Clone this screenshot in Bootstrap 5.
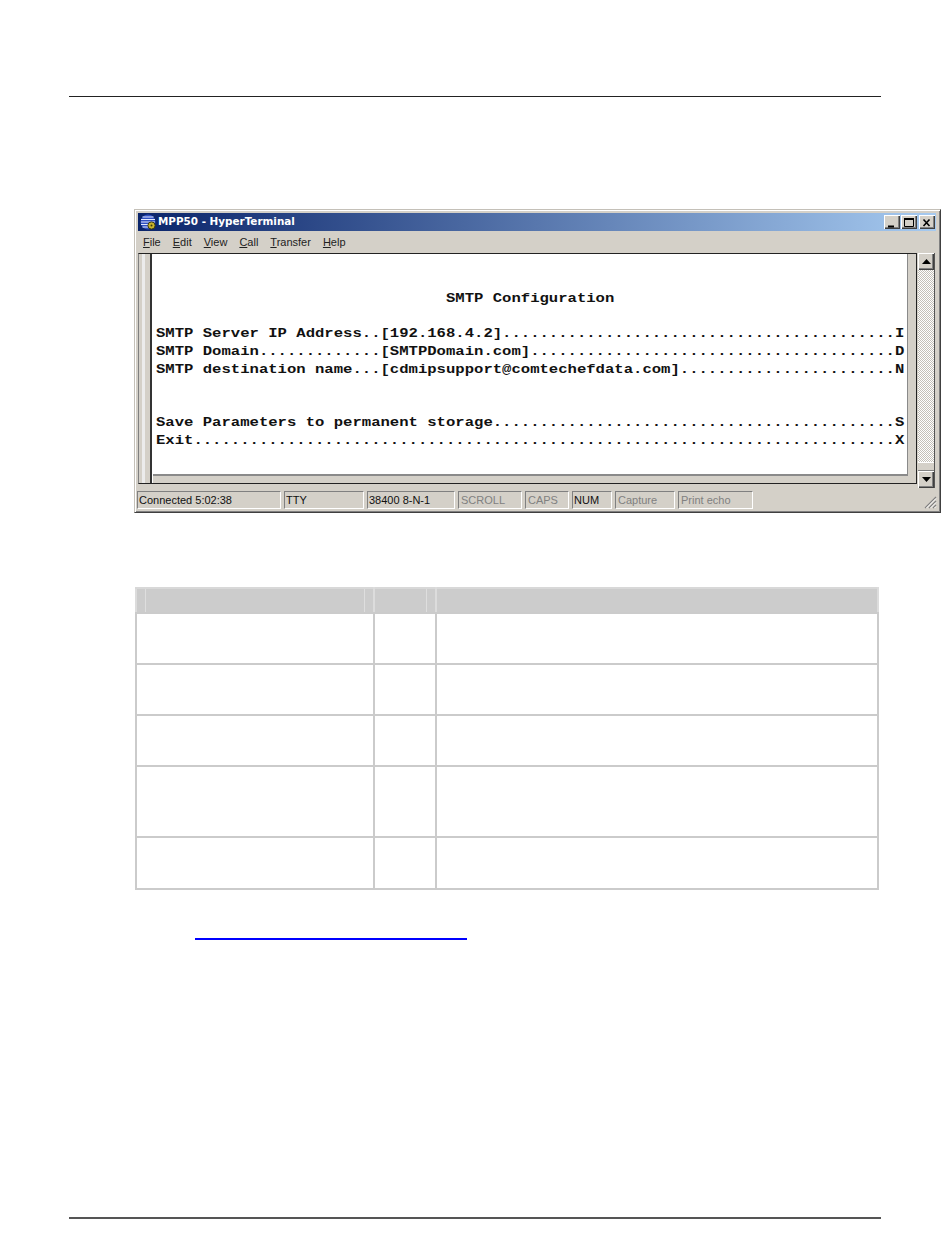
<!DOCTYPE html>
<html lang="en">
<head>
<meta charset="utf-8">
<title>MPP50 - HyperTerminal</title>
<link href="https://cdn.jsdelivr.net/npm/bootstrap@5.3.0/dist/css/bootstrap.min.css" rel="stylesheet">
<style>
body{background:#fff;height:1260px;overflow:hidden;font-family:"Liberation Sans",sans-serif}
.sheet{margin-left:69px;width:812px;height:1260px}
.rule-top{height:97px;border-bottom:1px solid #222}
.rule-bottom{height:2px;background:#555;margin-top:277px}

/* window */
.win{width:807px;height:304px;margin:112px 0 0 65px;background:#d4d0c8;border:1px solid #404040;border-top-color:#c4c0b8;border-left-color:#c4c0b8;box-shadow:inset 1px 1px 0 #fff,inset -1px -1px 0 #808080;padding:3px 4px 3px 3px;font-size:11px;color:#000}
.title-bar{height:18px;background:linear-gradient(90deg,#0a246a,#a6caf0);color:#fff;font-family:"DejaVu Sans",sans-serif;font-weight:700;font-size:10.4px;padding-left:2px;gap:1px}
.win-btn{width:16px;height:14px;background:#d4d0c8;box-shadow:inset 1px 1px 0 #fff,inset -1px -1px 0 #404040,inset -2px -2px 0 #808080;flex:none}
.win-btn-close{margin-left:1px}
.btn-group-win{gap:1px;margin-right:1px}
.menu-row{height:22px;gap:12px;padding-left:5px;font-size:11px;color:#222}
.term-wrap{height:235px;gap:1px}
.term-frame{flex:0 0 779px;height:231px;border:1px solid #222;border-left-color:#808080}
.left-gut{width:14px;flex:none;background:linear-gradient(90deg,#d4d0c8 0,#d4d0c8 3px,#ececec 3px,#ececec 6px,#d4d0c8 6px,#d4d0c8 11px,#333 11px,#333 13px,#fff 13px)}
.term-main{flex:1 1 auto;min-width:0;padding:0 8px 7px 0}
.term-white{height:222px;background:#fff;border-bottom:2px solid #8a8a8a;border-right:1px solid #8a8a8a;overflow:hidden}
.term-text{margin:0 0 0 3px;padding-top:36px;font-family:"Liberation Mono",monospace;font-weight:700;font-size:13px;line-height:17.7px;color:#111;overflow:visible;transform:scaleX(1.199);transform-origin:0 0;width:624px;white-space:pre}
.scroll-col{width:17px;flex:none;background:repeating-conic-gradient(#c4c0b8 0 25%,#fff 0 50%) 0 0/2px 2px;border-right:1px solid #555}
.arrow-btn{height:17px;background:#d4d0c8;box-shadow:inset 1px 1px 0 #fff,inset -1px -1px 0 #404040,inset -2px -2px 0 #808080}
.thumb-stub{height:9px;background:#d4d0c8;box-shadow:inset 0 1px 0 #fff,inset 0 -1px 0 #808080}
.status-row{height:18px;margin:3px 0 0 -1px;gap:3px;font-size:11px;line-height:17px}
.sfield{height:18px;border:1px solid;border-color:#808080 #fff #fff #808080;padding-left:1px;white-space:nowrap;color:#111}
.sfield-off{color:#808080;padding-left:2px}
.w-a{width:144px}.w-b{width:80px}.w-c{width:88px}.w-d{width:64px}.w-e{width:44px}.w-f{width:40px}.w-g{width:60px}.w-h{width:75px}
.grip{width:14px;height:14px;margin-top:4px;margin-right:-1px}

/* table */
.spec-table{width:742px;margin:74px 0 0 66px;table-layout:fixed;border-collapse:collapse;--bs-table-bg:transparent}
.spec-table th,.spec-table td{border:2px solid #cbcbcb;padding:0}
.spec-table thead th{height:25px;background:#ccc;border-left-color:#dcdcdc;border-right-color:#dcdcdc;border-top-color:#d8d8d8}
.head-tick{height:23px;margin:0 8px;border-left:1px solid #dedede;border-right:1px solid #dedede}
.tick-end{border-left:0}
.r51{height:51px}.r52{height:52px}.r71{height:71px}

.link-row{margin:48px 0 0 126px;height:2px}
.link-line{display:block;width:272px;border-bottom:2px solid #0000ff;text-decoration:none}
</style>
</head>
<body>
<div class="sheet">
  <div class="rule-top"></div>

  <div class="win">
    <div class="title-bar d-flex align-items-center">
      <svg width="17" height="17" viewBox="0 0 17 17" class="flex-shrink-0">
        <circle cx="8" cy="8" r="7.5" fill="#2f4fc0"/>
        <path d="M2.5 3h11M1 5.5h14M1 8h14M1 10.5h14M2.5 13h10" stroke="#e4eaff" stroke-width="1.1"/>
        <circle cx="11.5" cy="11.5" r="3.6" fill="#c9b52c" stroke="#3a3a10" stroke-width="1"/>
        <circle cx="11.5" cy="11.5" r="1" fill="#3a3a10"/>
      </svg>
      <span class="flex-grow-1">MPP50 - HyperTerminal</span>
      <div class="d-flex btn-group-win">
        <div class="win-btn"><svg width="16" height="14" viewBox="0 0 16 14"><path d="M4 10.5h6" stroke="#000" stroke-width="2"/></svg></div>
        <div class="win-btn"><svg width="16" height="14" viewBox="0 0 16 14"><path d="M3.5 3.5h9v7h-9z" fill="none" stroke="#000"/><path d="M3 3h10" stroke="#000" stroke-width="2"/></svg></div>
        <div class="win-btn win-btn-close"><svg width="16" height="14" viewBox="0 0 16 14"><path d="M4.5 3.5l6 6.5M10.5 3.5l-6 6.5" stroke="#000" stroke-width="1.6"/></svg></div>
      </div>
    </div>
    <div class="menu-row d-flex align-items-center">
      <span><u>F</u>ile</span><span><u>E</u>dit</span><span><u>V</u>iew</span><span><u>C</u>all</span><span><u>T</u>ransfer</span><span><u>H</u>elp</span>
    </div>
    <div class="term-wrap d-flex">
      <div class="term-frame d-flex">
        <div class="left-gut"></div>
        <div class="term-main">
          <div class="term-white">
<pre class="term-text">                               SMTP Configuration

SMTP Server IP Address..[192.168.4.2]..........................................I
SMTP Domain.............[SMTPDomain.com].......................................D
SMTP destination name...[cdmipsupport@comtechefdata.com].......................N


Save Parameters to permanent storage...........................................S
Exit...........................................................................X</pre>
          </div>
        </div>
      </div>
      <div class="scroll-col d-flex flex-column">
        <div class="arrow-btn d-flex align-items-center justify-content-center"><svg width="9" height="5" viewBox="0 0 9 5"><path d="M4.5 0L9 5H0z" fill="#000"/></svg></div>
        <div class="flex-grow-1"></div>
        <div class="thumb-stub"></div>
        <div class="arrow-btn d-flex align-items-center justify-content-center"><svg width="9" height="5" viewBox="0 0 9 5"><path d="M0 0h9L4.5 5z" fill="#000"/></svg></div>
      </div>
    </div>
    <div class="status-row d-flex">
      <div class="sfield w-a">Connected 5:02:38</div>
      <div class="sfield w-b">TTY</div>
      <div class="sfield w-c">38400 8-N-1</div>
      <div class="sfield sfield-off w-d">SCROLL</div>
      <div class="sfield sfield-off w-e">CAPS</div>
      <div class="sfield w-f">NUM</div>
      <div class="sfield sfield-off w-g">Capture</div>
      <div class="sfield sfield-off w-h">Print echo</div>
      <div class="flex-grow-1"></div>
      <svg class="grip" viewBox="0 0 14 14"><path d="M13 2L2 13M13 6L6 13M13 10L10 13" stroke="#808080" stroke-width="1.2"/><path d="M13 3.5L3.5 13M13 7.5L7.5 13M13 11.5L11.5 13" stroke="#fff"/></svg>
    </div>
  </div>

  <table class="spec-table">
    <colgroup><col style="width:238px"><col style="width:62px"><col style="width:442px"></colgroup>
    <thead>
      <tr><th><div class="head-tick"></div></th><th><div class="head-tick tick-end"></div></th><th></th></tr>
    </thead>
    <tbody>
      <tr class="r51"><td></td><td></td><td></td></tr>
      <tr class="r51"><td></td><td></td><td></td></tr>
      <tr class="r51"><td></td><td></td><td></td></tr>
      <tr class="r71"><td></td><td></td><td></td></tr>
      <tr class="r52"><td></td><td></td><td></td></tr>
    </tbody>
  </table>

  <div class="link-row"><a class="link-line" href="#" aria-label="support link"></a></div>
  <div class="rule-bottom"></div>
</div>
</body>
</html>
